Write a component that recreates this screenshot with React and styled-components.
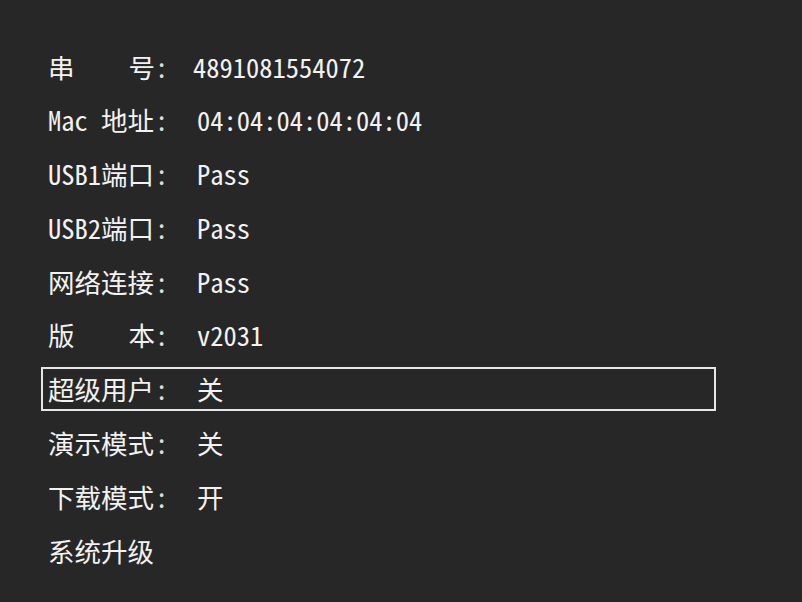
import React from "react";
import styled, { createGlobalStyle } from "styled-components";

const GlobalStyle = createGlobalStyle`
  html, body {
    margin: 0;
    padding: 0;
    background: #272727;
  }
  body {
    font-family: "Noto Sans Mono CJK SC", "Noto Sans CJK SC", monospace;
    color: #f2f2f2;
  }
`;

const rows = [
  { label: ["串", "号"], value: "4891081554072", tight: true },
  { label: ["Mac 地址"], value: "04:04:04:04:04:04" },
  { label: ["USB1端口"], value: "Pass" },
  { label: ["USB2端口"], value: "Pass" },
  { label: ["网络连接"], value: "Pass" },
  { label: ["版", "本"], value: "v2031" },
  { label: ["超级用户"], value: "关", selected: true },
  { label: ["演示模式"], value: "关" },
  { label: ["下载模式"], value: "开" },
  { label: ["系统升级"], action: true },
];

const App = () => {
  return (
    <Screen>
      <GlobalStyle />
      <Menu>
        {rows.map((row, i) => (
          <Row key={i} selected={row.selected}>
            {row.action ? (
              <Action>{row.label[0]}</Action>
            ) : (
              <>
                <Label>
                  {row.label.map((part, j) => (
                    <span key={j}>{part}</span>
                  ))}
                </Label>
                <Colon tight={row.tight}>:</Colon>
                <Value>{row.value}</Value>
              </>
            )}
          </Row>
        ))}
      </Menu>
    </Screen>
  );
};

export default App;

const Screen = styled.div`
  width: 802px;
  height: 602px;
  background: #272727;
  overflow: hidden;
`;

const Menu = styled.div`
  display: flex;
  flex-direction: column;
  gap: 9.8px;
  padding: 44px 0 0 41px;
  width: 675px;
`;

const Row = styled.div`
  display: flex;
  align-items: center;
  height: 44px;
  box-sizing: border-box;
  padding-left: 5px;
  font-size: 26.5px;
  border: 2px solid ${(p) => (p.selected ? "#e6e6e6" : "transparent")};
`;

const Label = styled.div`
  display: flex;
  justify-content: space-between;
  width: 107px;
  white-space: pre;
`;

const Colon = styled.span`
  width: ${(p) => (p.tight ? "38px" : "42px")};
  color: #dcdcdc;
`;

const Value = styled.span`
  white-space: pre;
`;

const Action = styled.span``;
